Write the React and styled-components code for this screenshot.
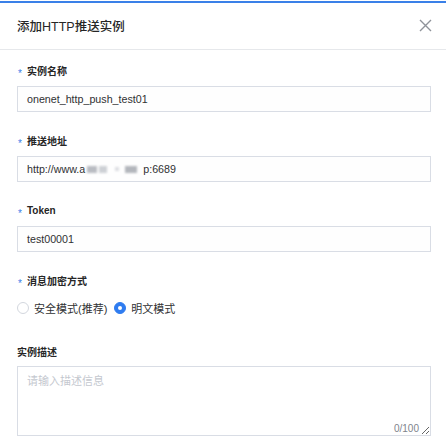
import React from "react";
import styled, { createGlobalStyle } from "styled-components";

const Global = createGlobalStyle`
  html, body { margin: 0; padding: 0; background: #ffffff; }
  body { font-family: "Liberation Sans", "Noto Sans CJK SC", sans-serif; }
  * { box-sizing: border-box; }
`;

const Dialog = styled.div`
  width: 446px;
  height: 444px;
  background: #ffffff;
  padding-top: 1px;
  overflow: hidden;
`;

const TopBar = styled.div`
  height: 2px;
  background: #3a80e8;
`;

const Header = styled.div`
  height: 47px;
  display: flex;
  align-items: center;
  justify-content: space-between;
  padding: 0 14px 2px 17px;
  border-bottom: 1px solid #e6e8eb;
`;

const Title = styled.div`
  font-size: 12.5px;
  font-weight: 500;
  color: #262626;
`;

const Close = styled.button`
  border: 0;
  background: none;
  padding: 0;
  width: 14px;
  height: 14px;
  display: flex;
  align-items: center;
  justify-content: center;
  cursor: pointer;
`;

const Body = styled.div`
  padding: 13px 15px 0 17px;
`;

const Item = styled.div`
  margin-bottom: ${(p) => p.$gap ?? 21}px;
`;

const Label = styled.div`
  display: flex;
  align-items: center;
  height: 14px;
  font-size: 10px;
  font-weight: 700;
  color: #262626;
  margin-bottom: ${(p) => p.$gap ?? 9}px;
`;

const Star = styled.span`
  color: #3a80e8;
  font-size: 10px;
  font-weight: 400;
  width: 10px;
  padding-left: 1px;
  transform: translateY(2.5px);
`;

const InputBox = styled.div`
  height: 26px;
  border: 1px solid #d9dde5;
  background: #fefefe;
  display: flex;
  align-items: center;
  padding: 0 9px;
  font-size: 10.7px;
  color: #303133;
  white-space: nowrap;
`;

const Masked = styled.span`
  display: inline-flex;
  align-items: center;
  width: 58px;
  height: 12px;
  gap: 2px;
  filter: blur(1.2px);
`;

const Blob = styled.span`
  display: inline-block;
  width: ${(p) => p.$w}px;
  height: ${(p) => p.$h ?? 7}px;
  margin-left: ${(p) => p.$ml ?? 0}px;
  background: ${(p) => p.$c};
`;

const RadioGroup = styled.div`
  height: 27px;
  display: flex;
  align-items: center;
  gap: 7px;
  padding-bottom: 3px;
`;

const RadioOption = styled.label`
  display: flex;
  align-items: center;
  gap: 5px;
  font-size: 11px;
  color: #303133;
  cursor: pointer;
`;

const RadioDot = styled.span`
  width: 12px;
  height: 12px;
  border-radius: 50%;
  border: 1px solid ${(p) => (p.$on ? "#2f7cf0" : "#d3d7de")};
  background: ${(p) => (p.$on ? "#2f7cf0" : "#ffffff")};
  display: flex;
  align-items: center;
  justify-content: center;
  &::after {
    content: "";
    width: 4px;
    height: 4px;
    border-radius: 50%;
    background: #ffffff;
    display: ${(p) => (p.$on ? "block" : "none")};
  }
`;

const AreaWrap = styled.div`
  position: relative;
`;

const TextArea = styled.textarea`
  display: block;
  width: 100%;
  height: 70px;
  border: 1px solid #d9dde5;
  border-radius: 0;
  padding: 5px 9px;
  font-family: "Liberation Sans", "Noto Sans CJK SC", sans-serif;
  font-size: 11px;
  color: #303133;
  outline: none;
  resize: vertical;
  &::placeholder {
    color: #c4c8cf;
  }
`;

const Counter = styled.span`
  position: absolute;
  right: 12px;
  bottom: 2px;
  font-size: 10px;
  color: #80848c;
`;

function Required({ children, gap }) {
  return (
    <Label $gap={gap}>
      <Star>*</Star>
      {children}
    </Label>
  );
}

export default function App() {
  return (
    <>
      <Global />
      <Dialog>
        <TopBar />
        <Header>
          <Title>添加HTTP推送实例</Title>
          <Close aria-label="close">
            <svg width="13" height="13" viewBox="0 0 13 13">
              <path d="M1 1 L12 12 M12 1 L1 12" stroke="#8f939a" strokeWidth="1.4" fill="none" />
            </svg>
          </Close>
        </Header>
        <Body>
          <Item>
            <Required>实例名称</Required>
            <InputBox>onenet_http_push_test01</InputBox>
          </Item>
          <Item>
            <Required>推送地址</Required>
            <InputBox>
              http://www.a
              <Masked>
                <Blob $w={10} $c="#b9bcc2" $ml={2} />
                <Blob $w={8} $c="#cdd0d5" />
                <Blob $w={4} $h={4} $c="#dcdee2" $ml={6} />
                <Blob $w={12} $c="#b3b6bc" $ml={4} />
              </Masked>
              p:6689
            </InputBox>
          </Item>
          <Item>
            <Required>Token</Required>
            <InputBox>test00001</InputBox>
          </Item>
          <Item>
            <Required>消息加密方式</Required>
            <RadioGroup>
              <RadioOption>
                <RadioDot />
                安全模式(推荐)
              </RadioOption>
              <RadioOption>
                <RadioDot $on />
                明文模式
              </RadioOption>
            </RadioGroup>
          </Item>
          <Item>
            <Label $gap={8}>实例描述</Label>
            <AreaWrap>
              <TextArea placeholder="请输入描述信息" />
              <Counter>0/100</Counter>
            </AreaWrap>
          </Item>
        </Body>
      </Dialog>
    </>
  );
}
